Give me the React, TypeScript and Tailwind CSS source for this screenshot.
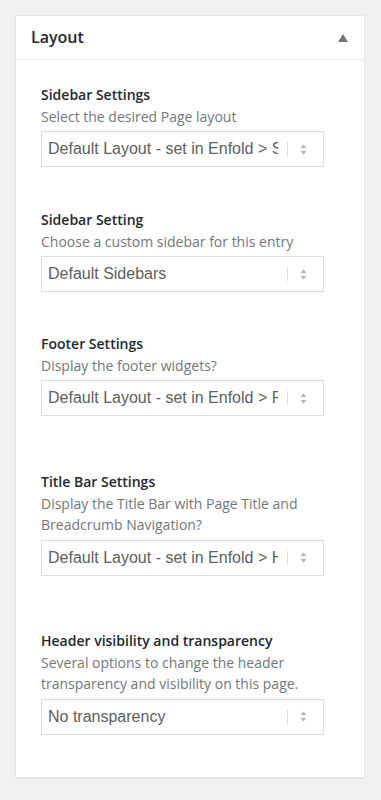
import React from 'react';

type Field = {
  label: string;
  description: string;
  value: string;
  gap: string;
};

const fields: Field[] = [
  {
    label: 'Sidebar Settings',
    description: 'Select the desired Page layout',
    value: 'Default Layout - set in Enfold > Sidebar',
    gap: 'mt-0',
  },
  {
    label: 'Sidebar Setting',
    description: 'Choose a custom sidebar for this entry',
    value: 'Default Sidebars',
    gap: 'mt-[42px]',
  },
  {
    label: 'Footer Settings',
    description: 'Display the footer widgets?',
    value: 'Default Layout - set in Enfold > Footer',
    gap: 'mt-[41px]',
  },
  {
    label: 'Title Bar Settings',
    description: 'Display the Title Bar with Page Title and Breadcrumb Navigation?',
    value: 'Default Layout - set in Enfold > Header',
    gap: 'mt-[55px]',
  },
  {
    label: 'Header visibility and transparency',
    description: 'Several options to change the header transparency and visibility on this page.',
    value: 'No transparency',
    gap: 'mt-[54.5px]',
  },
];

function SelectBox({ value }: { value: string }) {
  return (
    <div className="mt-[4px] flex h-[36px] w-[283px] items-center border border-[#dddddd] bg-white">
      <div className="ml-[6px] mr-[9px] min-w-0 flex-1 overflow-hidden whitespace-nowrap font-['Liberation_Sans',Arial,sans-serif] text-[16px] text-[#5e5e5e]">
        {value}
      </div>
      {/* separator + up/down arrows */}
      <div className="h-[14px] w-px bg-[#dddddd]" />
      <div className="flex w-[35px] items-center pl-[12px]">
        <svg width="7" height="11" viewBox="0 0 7 11" fill="#b4b4b4">
          <path d="M3.5 0.5 L6.5 4 L0.5 4 Z" />
          <path d="M0.5 7 L6.5 7 L3.5 10.5 Z" />
        </svg>
      </div>
    </div>
  );
}

export default function App() {
  return (
    <main className="min-h-[800px] bg-[#f1f1f1] pt-[15px] font-['Open_Sans',sans-serif]">
      <div className="ml-[15px] w-[350px] border border-[#e5e5e5] bg-white shadow-[0_1px_1px_rgba(0,0,0,0.04)]">
        {/* Header */}
        <div className="flex h-[44px] items-center justify-between border-b border-[#eeeeee] pl-[15px] pr-[16px]">
          <h2 className="text-[16px] font-semibold leading-[43px] text-[#23282d]">Layout</h2>
          <svg width="10" height="8" viewBox="0 0 10 8" fill="#72777c">
            <path d="M5 0 L10 8 L0 8 Z" />
          </svg>
        </div>

        {/* Fields */}
        <div className="pl-[25px] pt-[24px] pb-[42.5px]">
          {fields.map((f) => (
            <div key={f.label} className={f.gap}>
              <div className="text-[14px] font-semibold leading-[21.5px] text-[#23282d]">{f.label}</div>
              <p className="w-[290px] text-[14px] leading-[21.5px] text-[#72777c]">{f.description}</p>
              <SelectBox value={f.value} />
            </div>
          ))}
        </div>
      </div>
    </main>
  );
}
